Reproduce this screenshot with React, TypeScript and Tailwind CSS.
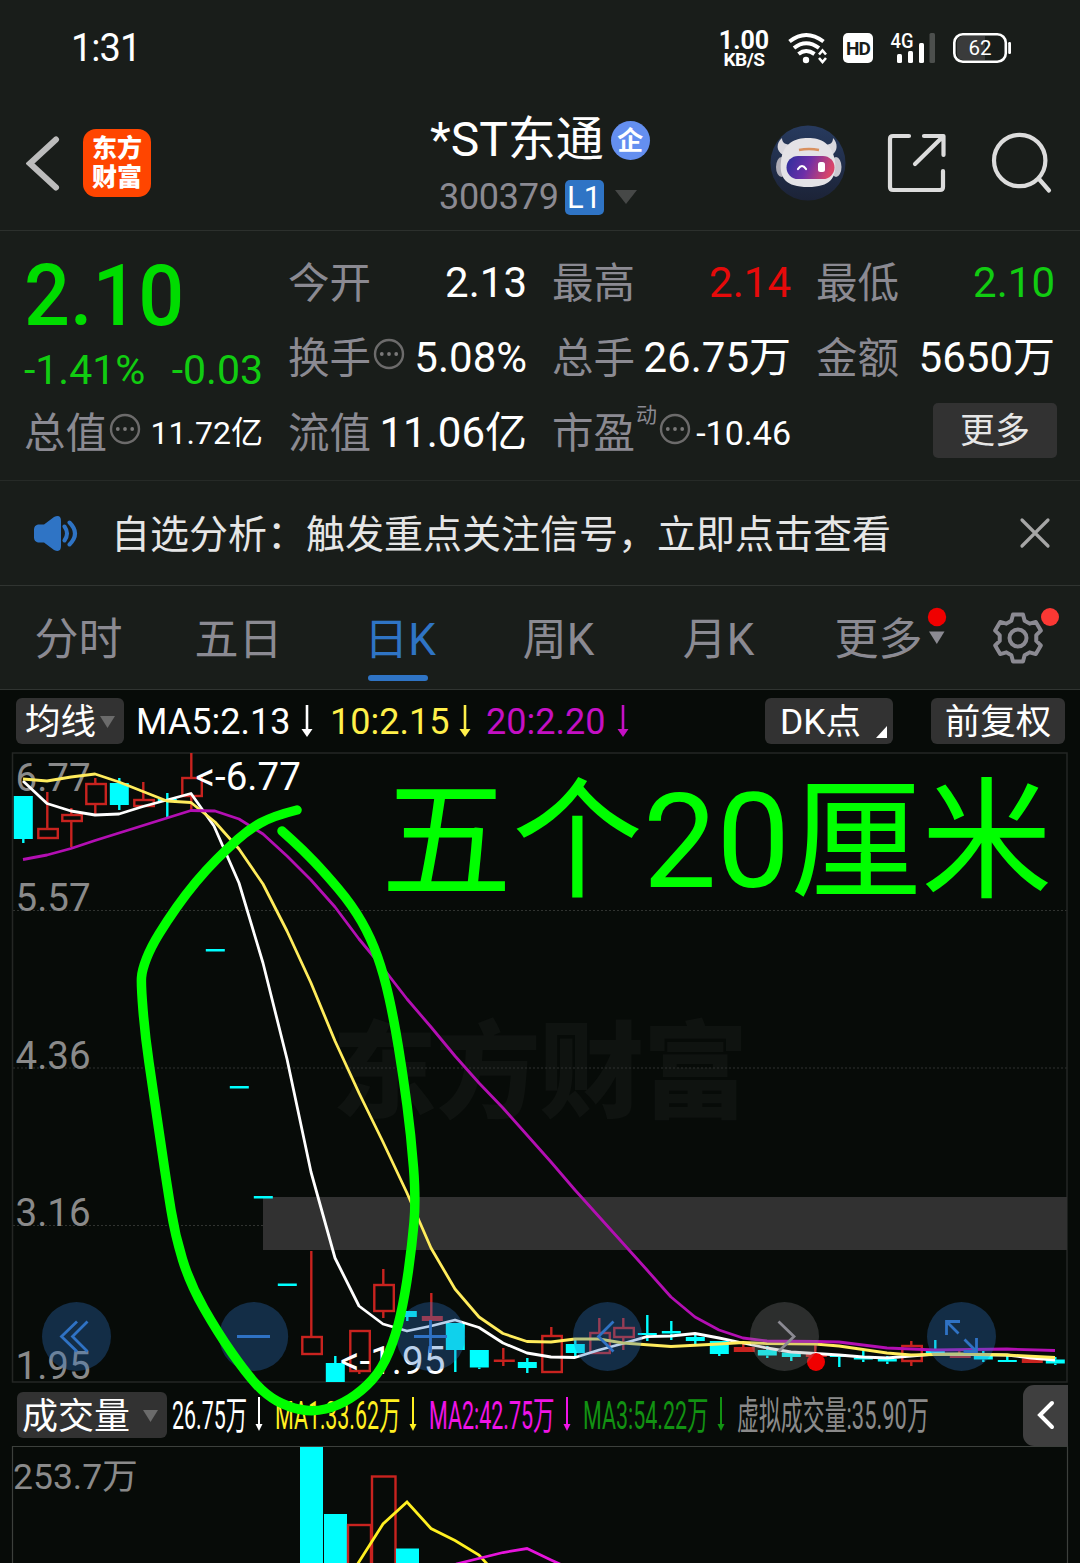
import React from 'react';

type Point = [number, number];

interface Candle {
  kind: 'up' | 'down';
  top: number;
  bottom: number;
  high?: number;
  low?: number;
  hollow?: boolean;
}

const RED = '#c8231f';
const CYAN = '#00ffff';
const GRAY = '#8b8a92';

const candles: Candle[] = [
  { kind: 'down', top: 796, bottom: 839, low: 843 },
  { kind: 'up', top: 828, bottom: 839, high: 792, hollow: true },
  { kind: 'up', top: 814, bottom: 822, high: 808, low: 847, hollow: true },
  { kind: 'up', top: 783, bottom: 805, high: 778, low: 814, hollow: true },
  { kind: 'down', top: 783, bottom: 805, high: 778, low: 810 },
  { kind: 'up', top: 799, bottom: 807, high: 782, hollow: true },
  { kind: 'down', top: 799, bottom: 801, high: 793, low: 817 },
  { kind: 'up', top: 777, bottom: 797, high: 753, low: 810, hollow: true },
  { kind: 'down', top: 949, bottom: 951.5 },
  { kind: 'down', top: 1086, bottom: 1088.5 },
  { kind: 'down', top: 1196, bottom: 1198.5 },
  { kind: 'down', top: 1283.5, bottom: 1286 },
  { kind: 'up', top: 1336, bottom: 1355, high: 1251, hollow: true },
  { kind: 'down', top: 1363, bottom: 1382, high: 1356 },
  { kind: 'up', top: 1330, bottom: 1372, low: 1374, hollow: true },
  { kind: 'up', top: 1284, bottom: 1312, high: 1269, low: 1318, hollow: true },
  { kind: 'down', top: 1311, bottom: 1317, low: 1321 },
  { kind: 'up', top: 1316, bottom: 1321, high: 1293 },
  { kind: 'down', top: 1323, bottom: 1350, low: 1372 },
  { kind: 'down', top: 1350, bottom: 1367.5, low: 1369 },
  { kind: 'up', top: 1359.5, bottom: 1362, high: 1348, low: 1366 },
  { kind: 'down', top: 1362, bottom: 1368, high: 1358, low: 1373 },
  { kind: 'up', top: 1335, bottom: 1373, high: 1327, hollow: true },
  { kind: 'down', top: 1344, bottom: 1353, high: 1340, low: 1358 },
  { kind: 'up', top: 1332, bottom: 1354, high: 1318, hollow: true },
  { kind: 'up', top: 1327, bottom: 1338, high: 1318, low: 1350, hollow: true },
  { kind: 'down', top: 1333, bottom: 1335, high: 1315, low: 1341 },
  { kind: 'down', top: 1331, bottom: 1333.5, high: 1321, low: 1340 },
  { kind: 'down', top: 1337, bottom: 1341, high: 1334, low: 1344 },
  { kind: 'down', top: 1341, bottom: 1354, low: 1356 },
  { kind: 'up', top: 1347, bottom: 1352, high: 1343 },
  { kind: 'down', top: 1350, bottom: 1355.5, high: 1346, low: 1358 },
  { kind: 'down', top: 1352.5, bottom: 1357, low: 1361 },
  { kind: 'up', top: 1354, bottom: 1357, high: 1345 },
  { kind: 'down', top: 1355, bottom: 1357, low: 1367 },
  { kind: 'down', top: 1357.5, bottom: 1359.5, high: 1350, low: 1362 },
  { kind: 'down', top: 1359, bottom: 1361.5, high: 1356, low: 1364 },
  { kind: 'up', top: 1345, bottom: 1362, high: 1341, low: 1366, hollow: true },
  { kind: 'down', top: 1351, bottom: 1353, high: 1340 },
  { kind: 'up', top: 1354, bottom: 1358, high: 1350 },
  { kind: 'down', top: 1355.5, bottom: 1359.5, high: 1351, low: 1362 },
  { kind: 'down', top: 1360, bottom: 1362, high: 1355 },
  { kind: 'up', top: 1358.5, bottom: 1363 },
  { kind: 'down', top: 1359.5, bottom: 1363.5, high: 1357, low: 1365 },
];

const ma5: Point[] = [
  [23, 781], [47, 803.5], [71, 811], [95, 815], [119, 814], [143, 806.5], [167, 800], [191, 793.5],
  [214, 826], [239, 883], [263, 963], [287, 1059], [311, 1172], [335, 1258], [359, 1306], [383, 1324],
  [407, 1331], [431, 1326], [455, 1320], [479, 1327.5], [503, 1343], [527, 1353], [551, 1357],
  [575, 1357.5], [599, 1350], [623, 1343.5], [647, 1336.7], [671, 1336], [695, 1333.5], [719, 1338],
  [743, 1343], [767, 1348], [791, 1352], [815, 1353.5], [839, 1355], [863, 1357], [887, 1358],
  [911, 1356], [935, 1354], [1007, 1355], [1031, 1358], [1055, 1360],
];

const ma10: Point[] = [
  [23, 779], [47, 781], [71, 777], [95, 774], [119, 782], [167, 801], [191, 802.5], [215, 822],
  [239, 849], [263, 884], [287, 931], [311, 983], [335, 1041], [359, 1093], [383, 1142], [407, 1193],
  [431, 1248], [455, 1289], [479, 1317], [503, 1333.5], [527, 1341.5], [551, 1342], [575, 1339],
  [599, 1339], [623, 1343], [671, 1346.5], [719, 1344], [743, 1342.5], [767, 1343.5], [815, 1344],
  [839, 1346], [887, 1353], [911, 1355], [959, 1354], [1007, 1355], [1055, 1357.5],
];

const ma20: Point[] = [
  [23, 859.5], [47, 855], [71, 848.5], [95, 840.5], [191, 810.5], [215, 811], [239, 819], [263, 834],
  [287, 856], [311, 880], [335, 907], [359, 939], [383, 968], [407, 999], [431, 1027], [455, 1056],
  [479, 1083], [503, 1108], [551, 1162], [575, 1190], [647, 1270], [671, 1297], [695, 1317],
  [719, 1330], [743, 1338], [767, 1341], [815, 1341.5], [839, 1342], [887, 1348], [935, 1350],
  [1007, 1349], [1055, 1350.5],
];

const loop: Point[] = [
  [297, 810], [273, 816], [248, 830], [227, 849], [206, 870], [186, 894], [167, 921], [151, 947],
  [142, 970], [141, 985], [145, 1035], [153, 1090], [161, 1145], [167, 1185], [175, 1235], [190, 1284],
  [218, 1333], [246, 1373], [266, 1395], [288, 1407], [313, 1412], [338, 1406], [362, 1391],
  [382, 1369], [396, 1335], [405, 1295], [412, 1245], [416, 1200], [411, 1135], [403, 1075],
  [394, 1020], [384, 975], [371, 938], [352, 905], [325, 873], [303, 850], [282, 831],
];

const toPoints = (pts: Point[]) => pts.map((p) => p.join(',')).join(' ');

// Quadratic curve through the midpoints, so a freehand stroke stays smooth
const smoothPath = (pts: Point[]) => {
  let d = `M${pts[0][0]} ${pts[0][1]}`;
  for (let i = 1; i < pts.length - 1; i++) {
    const mx = (pts[i][0] + pts[i + 1][0]) / 2;
    const my = (pts[i][1] + pts[i + 1][1]) / 2;
    d += ` Q${pts[i][0]} ${pts[i][1]} ${mx} ${my}`;
  }
  const last = pts[pts.length - 1];
  return `${d} L${last[0]} ${last[1]}`;
};

const gearPoints = () => {
  const pts: Point[] = [];
  for (let t = 0; t < 6; t++) {
    const base = t * 60 - 90;
    [[18.5, -21], [24, -12], [24, 12], [18.5, 21]].forEach(([r, off]) => {
      const a = ((base + off) * Math.PI) / 180;
      pts.push([26 + r * Math.cos(a), 26 + r * Math.sin(a)]);
    });
  }
  return toPoints(pts);
};

const StatusBar: React.FC = () => (
  <div className="flex h-24 items-center pl-[71px] text-white">
    <span className="w-[648px] text-[38px] leading-none tracking-[-1px]">1:31</span>
    <div className="flex w-[50px] flex-col items-center pt-[3px] font-bold">
      <span className="text-[25px] leading-[20px]">1.00</span>
      <span className="text-[19px] leading-[18px] tracking-[-0.5px]">KB/S</span>
    </div>
    <svg className="ml-[18px]" width="42" height="32" viewBox="787 32 42 32" fill="none" stroke="#fff">
      <path d="M789.5 41.5Q806 28.5 823.5 41.5" strokeWidth="4" />
      <path d="M794 48Q806 38.5 819 48" strokeWidth="4" />
      <path d="M798.5 54Q806 48 814.5 54" strokeWidth="4" />
      <circle cx="806" cy="60" r="3.2" fill="#fff" stroke="none" />
      <path d="M819 54.5l3.5-4 3.5 4M819 58l3.5 4 3.5-4" strokeWidth="2.6" />
    </svg>
    <span className="ml-[14px] flex h-[30px] w-[30px] items-center justify-center rounded-[5px] bg-white text-[19px] font-bold leading-none tracking-[-1px] text-[#191d1a]">
      HD
    </span>
    <svg className="ml-[17px] overflow-visible" width="46" height="32" viewBox="890 32 46 32">
      <text x="890.5" y="47.5" fontSize="20" fontWeight="500" fill="#fff" textLength="23" lengthAdjust="spacingAndGlyphs">
        4G
      </text>
      <rect x="897" y="54" width="5" height="9" rx="1.5" fill="#fff" />
      <rect x="908" y="51" width="5" height="12" rx="1.5" fill="#fff" />
      <rect x="919" y="43" width="5" height="20" rx="1.5" fill="#fff" />
      <rect x="929.5" y="33" width="5.5" height="30" rx="1.5" fill="#4c4f4d" />
    </svg>
    <svg className="ml-[16px]" width="60" height="32" viewBox="952 32 60 32">
      <path d="M963 36h22v24h-22a6 6 0 0 1-6-6V42a6 6 0 0 1 6-6Z" fill="#3a3b3b" />
      <rect x="954.3" y="34.3" width="51.5" height="27.4" rx="8.5" fill="none" stroke="#fff" strokeWidth="2.6" />
      <rect x="1008.2" y="42" width="2.8" height="12" rx="1.2" fill="#fff" />
      <text x="980" y="55" fontSize="20.5" fill="#fff" textAnchor="middle">62</text>
    </svg>
  </div>
);

const RobotAvatar: React.FC = () => (
  <svg width="76" height="76" viewBox="0 0 76 76">
    <defs>
      <linearGradient id="avatarBg" x1="0" y1="0" x2="0" y2="1">
        <stop offset="0" stopColor="#273a5e" />
        <stop offset="1" stopColor="#1c2337" />
      </linearGradient>
      <linearGradient id="visor" x1="0" y1="0" x2="1" y2="0.2">
        <stop offset="0" stopColor="#2b2f9c" />
        <stop offset="0.5" stopColor="#6d2fa8" />
        <stop offset="1" stopColor="#d8456a" />
      </linearGradient>
    </defs>
    <circle cx="38" cy="38" r="37.5" fill="url(#avatarBg)" />
    <path d="M12 13c-6 5-6 13 1 17l9-10c-6 0-10-2-10-7Z" fill="#d9d7dd" />
    <path d="M63 13c5 5 5 13-1 17l-8-10c6 0 9-2 9-7Z" fill="#d9d7dd" />
    <ellipse cx="11.500" cy="42" rx="5.500" ry="10" fill="#aeacb6" />
    <ellipse cx="66" cy="42" rx="5.500" ry="10" fill="#c9c7cf" />
    <path d="M11 36C13 18 25 13 38 13s24 5 27 23c2 17-5 26-27 26S9 53 11 36Z" fill="#e4e2e6" />
    <rect x="16.500" y="31" width="48" height="23" rx="11.500" fill="url(#visor)" />
    <path d="M29 25q10-2 20 0" stroke="#d9905f" strokeWidth="2.600" fill="none" />
    <path d="M28 44q4-6 8 0" stroke="#fff" strokeWidth="2.200" fill="none" strokeLinecap="round" />
    <rect x="48" y="37" width="7" height="10" rx="2.500" fill="#fff" />
  </svg>
);

const Header: React.FC = () => (
  <header className="flex h-[135px] items-center border-b border-[#2c302d] pl-[26px]">
    <svg width="34" height="56" viewBox="26 135 34 56" fill="none">
      <path d="M56 139.500L30 163.500L56 187.500" stroke="#bcbcbc" strokeWidth="6" strokeLinecap="round" />
    </svg>
    <div className="ml-[23px] flex h-[68px] w-[68px] flex-col items-center justify-center rounded-[13px] bg-[#ff4500] text-[25px] font-black leading-[29px] text-white">
      <span>东方</span>
      <span>财富</span>
    </div>
    <div className="ml-[279px] flex w-[223px] flex-col pt-[10px]">
      <div className="flex h-[58px] items-center">
        <span className="whitespace-nowrap text-[48px] leading-none text-white">*ST东通</span>
        <span className="ml-[7px] flex h-[39px] w-[39px] shrink-0 items-center justify-center rounded-full bg-[#648ff0] pt-[2px] text-[26px] font-bold leading-none text-white">
          企
        </span>
      </div>
      <div className="flex h-[56px] items-center pl-[9px]">
        <span className="text-[36px] leading-none tracking-[-0.3px] text-[#8b8a92]">300379</span>
        <span className="ml-[6px] flex h-[35px] w-[39px] items-center justify-center rounded-[5px] bg-[#2f74c5] text-[31px] leading-none text-white">
          L1
        </span>
        <svg className="ml-[11px]" width="22" height="14" viewBox="0 0 22 14">
          <path d="M0 0h22L11 14Z" fill="#464847" />
        </svg>
      </div>
    </div>
    <div className="ml-[117px]">
      <RobotAvatar />
    </div>
    <svg className="ml-[41px]" width="60" height="60" viewBox="887 134 60 60" fill="none" stroke="#dcdcdc" strokeWidth="4.200" strokeLinecap="round" strokeLinejoin="round">
      <path d="M909 137h-16q-3 0-3 3v48q0 3 3 3h47q3 0 3-3v-16" />
      <path d="M924 137h19.500v19M943 137.500L915 165" />
    </svg>
    <svg className="ml-[43px]" width="64" height="64" viewBox="989 131 64 64" fill="none" stroke="#dcdcdc" strokeWidth="4.200" strokeLinecap="round">
      <circle cx="1018.700" cy="160.500" r="25.700" />
      <path d="M1038 179L1048 190.500" />
    </svg>
  </header>
);

const InfoDots: React.FC<{ className?: string }> = ({ className = '' }) => (
  <svg className={`shrink-0 ${className}`} width="32" height="32" viewBox="0 0 32 32" fill="none">
    <circle cx="16" cy="16" r="14" stroke="#6c6b6b" strokeWidth="2.400" />
    <circle cx="8.800" cy="16" r="1.900" fill="#7a7979" />
    <circle cx="16" cy="16" r="1.900" fill="#7a7979" />
    <circle cx="23.200" cy="16" r="1.900" fill="#7a7979" />
  </svg>
);

const Quote: React.FC<{ label: string; value: string; color?: string; size?: string; dots?: boolean; sup?: string }> = ({
  label,
  value,
  color = 'text-white',
  size = 'text-[42px]',
  dots = false,
  sup,
}) => (
  <div className="flex h-[75px] w-[239px] items-center whitespace-nowrap leading-none">
    <span className="pt-[3px] text-[41.500px] text-[#8b8a92]">{label}</span>
    {sup && <span className="mb-[35px] ml-px text-[21px] text-[#8b8a92]">{sup}</span>}
    {dots && <InfoDots className="mb-[7px] ml-[1.500px]" />}
    <span className={`ml-auto ${size} ${color}`}>{value}</span>
  </div>
);

const QuotePanel: React.FC = () => (
  <section className="flex h-[250px] gap-[25px] border-b border-[#262a27] pl-6 pt-[14px]">
    <div className="w-[239px] text-[#00dc00]">
      <div className="flex h-[98px] items-center pt-[3px]">
        <span className="origin-left scale-x-[0.94] text-[86px] font-medium leading-none">2.10</span>
      </div>
      <div className="flex h-[52px] items-center justify-between pt-[2px] text-[41px] leading-none text-[#11cc11]">
        <span>-1.41%</span>
        <span>-0.03</span>
      </div>
      <Quote label="总值" value="11.72亿" size="text-[32px]" dots />
    </div>
    <div>
      <Quote label="今开" value="2.13" />
      <Quote label="换手" value="5.08%" dots />
      <Quote label="流值" value="11.06亿" />
    </div>
    <div>
      <Quote label="最高" value="2.14" color="text-[#e60a0a]" />
      <Quote label="总手" value="26.75万" />
      <Quote label="市盈" value="-10.46" size="text-[34px]" dots sup="动" />
    </div>
    <div>
      <Quote label="最低" value="2.10" color="text-[#11cc11]" />
      <Quote label="金额" value="5650万" />
      <div className="-mr-[2px] flex h-[75px] items-center justify-end pb-[4px]">
        <button className="h-[55px] w-[124px] rounded-[5px] bg-[#323232] pt-[2px] text-[35px] leading-none text-[#e6e6e6]">
          更多
        </button>
      </div>
    </div>
  </section>
);

const Notice: React.FC = () => (
  <section className="flex h-[105px] items-center border-b border-[#303431] pl-[33px]">
    <svg width="46" height="38" viewBox="33 513 46 38" fill="none">
      <path d="M38 523.500h6l10-7.500q7-3 7 4v25q0 7-7 4l-10-7.500h-6q-4-1-4-5v-8q0-4 4-5Z" fill="#2f74c5" />
      <path d="M64.500 525.500q5 7 0 14M69.500 521.500q11 11 0 22" stroke="#2f74c5" strokeWidth="4" strokeLinecap="round" />
    </svg>
    <p className="ml-[32px] w-[908px] whitespace-nowrap pt-[4px] text-[39px] leading-none text-[#e6e6e6]">
      自选分析：触发重点关注信号，立即点击查看
    </p>
    <svg width="32" height="32" viewBox="0 0 32 32" stroke="#a6a6a6" strokeWidth="3.200" strokeLinecap="round">
      <path d="M3 3L29 29M29 3L3 29" />
    </svg>
  </section>
);

const tabs = ['分时', '五日', '日K', '周K', '月K', '更多'];

const Tabs: React.FC = () => (
  <nav className="flex h-[104px] items-center border-b border-[#303431] text-[44px] leading-none text-[#8b8a92]">
    {tabs.map((tab) => (
      <div key={tab} className={`relative flex h-full w-40 items-center justify-center pt-[4px] ${tab === '日K' ? 'text-[#2f74c5]' : 'pr-[3px]'}`}>
        {tab}
        {tab === '日K' && <span className="absolute bottom-[8px] left-[48px] h-[6px] w-[60px] rounded-full bg-[#2f74c5]" />}
        {tab === '更多' && (
          <svg className="absolute left-[126px] top-[20px]" width="22" height="40" viewBox="926 606 22 40">
            <circle cx="937" cy="617" r="9.200" fill="#f00000" />
            <path d="M929 631.500h15.500L936.800 644Z" fill={GRAY} />
          </svg>
        )}
      </div>
    ))}
    <div className="relative ml-8">
      <svg width="52" height="52" viewBox="0 0 52 52" fill="none" stroke={GRAY} strokeWidth="4" strokeLinejoin="round">
        <polygon points={gearPoints()} />
        <circle cx="26" cy="26" r="8.500" />
      </svg>
      <span className="absolute -right-[15px] -top-[4px] h-[18px] w-[18px] rounded-full bg-[#fb3834]" />
    </div>
  </nav>
);

const DownArrow: React.FC<{ className?: string; color: string }> = ({ className = '', color }) => (
  <svg className={className} width="12" height="34" viewBox="0 0 12 34">
    <path d="M6 1V27" stroke={color} strokeWidth="2.600" />
    <path d="M0.500 25H11.500L6 33Z" fill={color} />
  </svg>
);

const MaRow: React.FC = () => (
  <div className="flex h-[62px] items-center pl-4 text-[36px] leading-none">
    <button className="flex h-[46px] w-[108px] items-center rounded-[6px] bg-[#323232] pl-[9px] pt-[4px] text-[35.500px] leading-none text-white">
      均线
      <svg className="-mt-[3px] ml-[4px]" width="15" height="12" viewBox="0 0 15 12">
        <path d="M0 0h15L7.500 12Z" fill="#6b6b6b" />
      </svg>
    </button>
    <span className="ml-[12px] w-[165px] pt-[2px] text-white">MA5:2.13</span>
    <DownArrow color="#fff" />
    <span className="ml-[17px] w-[129px] pt-[2px] text-[#fff04a]">10:2.15</span>
    <DownArrow color="#fff04a" />
    <span className="ml-[15px] w-[131px] pt-[2px] text-[#c410c4]">20:2.20</span>
    <DownArrow color="#c410c4" />
    <button className="ml-[136px] flex h-[46px] w-[128px] items-center rounded-[6px] bg-[#323232] pl-[15px] pt-[4px] text-[35.500px] leading-none text-white">
      DK点
      <svg className="ml-auto mr-[6px] mt-[18px]" width="11" height="12" viewBox="0 0 11 12">
        <path d="M11 0V12H0Z" fill="#fff" />
      </svg>
    </button>
    <button className="ml-[38px] h-[46px] w-[134px] rounded-[6px] bg-[#323232] pt-[4px] text-[35.500px] leading-none text-white">
      前复权
    </button>
  </div>
);

const CandleMark: React.FC<{ candle: Candle; index: number }> = ({ candle, index }) => {
  const x = 23.3 + index * 24;
  const color = candle.kind === 'up' ? RED : CYAN;
  const { top, bottom, high = top, low = bottom, hollow } = candle;
  return (
    <g>
      {high < top && <rect x={x - 1.2} y={high} width="2.400" height={top - high} fill={color} />}
      {low > bottom && <rect x={x - 1.2} y={bottom} width="2.400" height={low - bottom} fill={color} />}
      {hollow ? (
        <rect x={x - 9} y={top + 1} width="19.500" height={Math.max(bottom - top - 2, 1)} fill="none" stroke={color} strokeWidth="2.400" />
      ) : (
        <rect x={x - 9.5} y={top} width={candle.kind === 'up' ? 21 : 19} height={bottom - top} fill={color} />
      )}
    </g>
  );
};

const axis: [string, number][] = [
  ['6.77', 791],
  ['5.57', 911],
  ['4.36', 1068.5],
  ['3.16', 1226],
  ['1.95', 1379],
];

const PriceChart: React.FC = () => (
  <svg className="block overflow-visible" width="1080" height="632" viewBox="0 752 1080 632" fill="none">
    <text x="332" y="1109" fontSize="105" fontWeight="900" fill="#0f1310" textLength="416">
      东方财富
    </text>
    {[910.5, 1068, 1225.5].map((y) => (
      <path key={y} d={`M13 ${y}H1067`} stroke="#303330" strokeWidth="1" strokeDasharray="2 2" />
    ))}
    <rect x="12.500" y="753" width="1054.500" height="629" stroke="#242724" strokeWidth="1.500" />
    <rect x="263" y="1197" width="804" height="53" fill="#313131" />
    {axis.map(([label, y]) => (
      <text key={label} x="15.500" y={y} fontSize="38.500" fill="#8a8a8a">{label}</text>
    ))}
    {candles.map((candle, i) => (
      <CandleMark key={i} candle={candle} index={i} />
    ))}
    <polyline points={toPoints(ma5)} stroke="#fff" strokeWidth="2.800" strokeLinejoin="round" />
    <polyline points={toPoints(ma10)} stroke="#ffec5c" strokeWidth="2.800" strokeLinejoin="round" />
    <polyline points={toPoints(ma20)} stroke="#b30fb3" strokeWidth="2.800" strokeLinejoin="round" />
    <text x="195.500" y="789.500" fontSize="38.500" fill="#fff">&lt;-6.77</text>
    <text x="340" y="1373.500" fontSize="38.500" fill="#fff">&lt;-1.95</text>
    <circle cx="816" cy="1362" r="9" fill="#f00000" />

    {/* Floating chart controls */}
    {[76.5, 253.7, 430.7, 607.5, 961.5].map((cx) => (
      <circle key={cx} cx={cx} cy="1336.500" r="34.500" fill="#2f72c4" fillOpacity="0.330" />
    ))}
    <circle cx="784.500" cy="1336.500" r="34.500" fill="#8c8c8e" fillOpacity="0.280" />
    <g stroke="#2f72c4" strokeWidth="2.800">
      <path d="M77 1321.500L61.500 1336.500L77 1351.500M87.500 1321.500L72.500 1336.500L87.500 1351.500" />
      <path d="M237 1336.500H270" />
      <path d="M414 1336.500H447M430.500 1320V1353" />
      <path d="M613.500 1321.500L598.500 1336.500L613.500 1351.500" />
      <path d="M960 1321.500H946.500V1335M946.500 1321.500L958.500 1333.500" />
      <path d="M963.500 1351.500H976.500V1338M976.500 1351.500L964.500 1339.500" />
    </g>
    <path d="M778.500 1321.500L794 1336.500L778.500 1351.500" stroke={GRAY} strokeWidth="2.800" />
  </svg>
);

const volumeLabels = [
  { text: '26.75万', x: 172, scale: 0.55, color: '#fff', arrow: 259 },
  { text: 'MA1:33.62万', x: 275, scale: 0.55, color: '#fff021', arrow: 413 },
  { text: 'MA2:42.75万', x: 429, scale: 0.55, color: '#f014e6', arrow: 567 },
  { text: 'MA3:54.22万', x: 583, scale: 0.55, color: '#129212', arrow: 721 },
  { text: '虚拟成交量:35.90万', x: 737, scale: 0.562, color: '#8a8a8a' },
];

const VolumeRow: React.FC = () => (
  <div className="flex h-[62px] items-center pl-[17px]">
    <button className="flex h-[46px] w-[150px] items-center rounded-[6px] bg-[#323232] pl-[5px] pt-[4px] text-[36px] leading-none text-white">
      成交量
      <svg className="-mt-[3px] ml-[13px]" width="15" height="12" viewBox="0 0 15 12">
        <path d="M0 0h15L7.500 12Z" fill="#6b6b6b" />
      </svg>
    </button>
    <svg width="856" height="62" viewBox="167 1384 856 62">
      {volumeLabels.map((item) => (
        <g key={item.text}>
          <text transform={`translate(${item.x} 1428.500) scale(${item.scale} 1)`} fontSize="39" fill={item.color}>
            {item.text}
          </text>
          {item.arrow && (
            <>
              <path d={`M${item.arrow} 1397V1425`} stroke={item.color} strokeWidth="2" />
              <path d={`M${item.arrow - 3.5} 1424h7l-3.500 7Z`} fill={item.color} />
            </>
          )}
        </g>
      ))}
    </svg>
    <button className="flex h-[61px] w-[45px] items-center justify-center rounded-l-[11px] bg-[#3f3f3f]">
      <svg width="20" height="30" viewBox="0 0 20 30" fill="none">
        <path d="M16 3L4 15L16 27" stroke="#fff" strokeWidth="4" strokeLinecap="round" />
      </svg>
    </button>
  </div>
);

const VolumeChart: React.FC = () => (
  <svg className="block" width="1080" height="117" viewBox="0 1446 1080 117" fill="none">
    <path d="M12.500 1563V1446.500H1067.500V1563" stroke="#3c403c" strokeWidth="1.200" />
    <text x="13" y="1488.500" fontSize="35.500" fill="#8a8a8a">253.7万</text>
    <rect x="300" y="1447" width="23" height="120" fill={CYAN} />
    <rect x="324" y="1514" width="23" height="60" fill={CYAN} />
    <rect x="348" y="1525" width="23" height="60" stroke={RED} strokeWidth="2.400" />
    <rect x="372" y="1476.500" width="23.500" height="100" stroke={RED} strokeWidth="2.400" />
    <rect x="396" y="1548.500" width="23" height="40" fill={CYAN} />
    <polyline points="357,1565 383,1524 407,1502 431,1528.500 455,1540.500 479,1555 488,1565" stroke="#fff021" strokeWidth="2.800" />
    <polyline points="456,1564 503,1552.500 527,1548.500 551,1560 562,1565" stroke="#e614dc" strokeWidth="2.800" />
  </svg>
);

export default function App() {
  return (
    <div className="h-[1563px] w-[1080px] overflow-hidden bg-[#191d1a] font-['Roboto','Noto_Sans_CJK_SC',sans-serif]">
      <StatusBar />
      <Header />
      <QuotePanel />
      <Notice />
      <Tabs />
      <main className="relative h-[873px] bg-[#070b08]">
        <MaRow />
        <PriceChart />
        <VolumeRow />
        <VolumeChart />
        {/* Freehand markup laid over the charts */}
        <svg className="pointer-events-none absolute left-0 top-0" width="1080" height="873" viewBox="0 690 1080 873" fill="none">
          <path d={smoothPath(loop)} stroke="#00ff00" strokeWidth="9.500" strokeLinecap="round" strokeLinejoin="round" />
          <text x="381" y="887" fontSize="131" fill="#00ff00">五个20厘米</text>
        </svg>
      </main>
    </div>
  );
}
